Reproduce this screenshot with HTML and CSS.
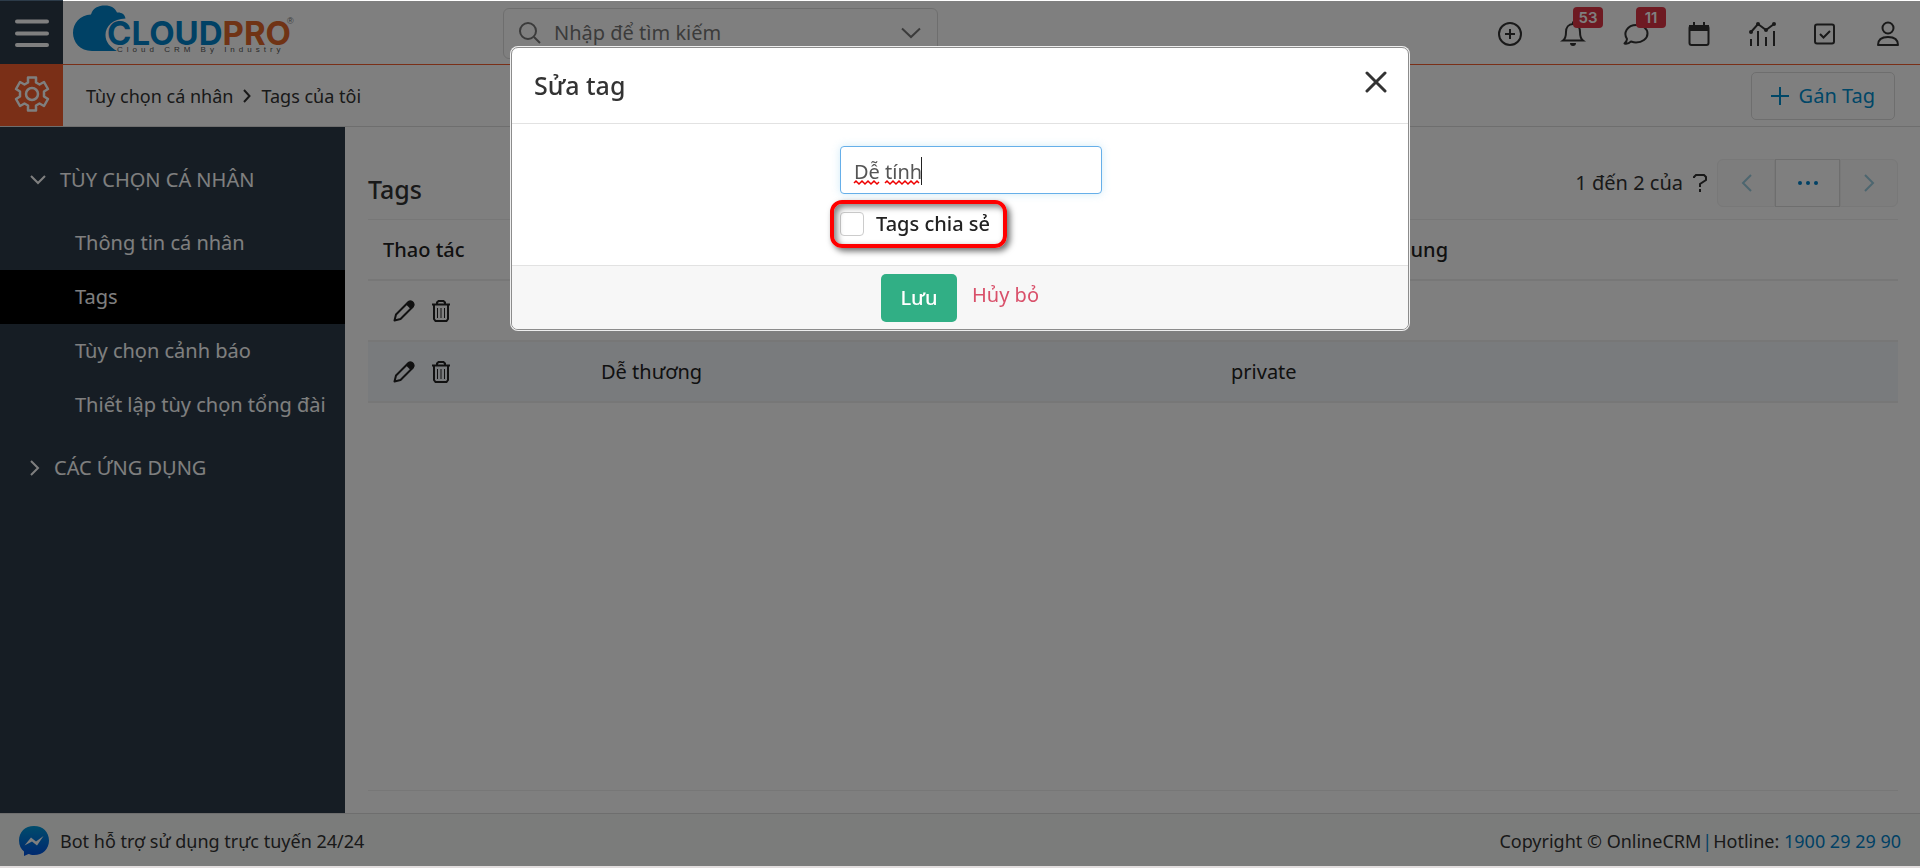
FILE: index.html
```html
<!DOCTYPE html>
<html lang="vi">
<head>
<meta charset="utf-8">
<title>Tags của tôi - CloudPro</title>
<link rel="stylesheet" href="styles.css">
</head>
<body>
<div class="page">
  <header class="topbar">
    <button class="tile tile-menu" aria-label="Menu">
      <svg width="36" height="30" viewBox="0 0 36 30" fill="none" stroke="currentColor" stroke-width="4" stroke-linecap="round"><path d="M3 3.500h30M3 15.500h30M3 27h30"/></svg>
    </button>
    <a class="logo" href="#" aria-label="CloudPro">
      <svg width="230" height="56" viewBox="0 0 230 56">
        <path class="logo-blue" d="M46 47H21C9 47 2 38 2 29C2 19 9 11 20 10.500C22 4 27 1.500 34 1.500C40 1.500 44 4 46 8.500C50 8 54 10 54.500 14.500C42 15 34.500 22 34.500 31C34.500 38 39 43 46 47Z"/>
        <text class="logo-name" x="36" y="41"><tspan class="logo-blue">CLOUD</tspan><tspan class="logo-orange">PRO</tspan></text>
        <text class="logo-tag" x="46" y="48">Cloud CRM By Industry</text>
        <text class="logo-mark" x="216" y="20">®</text>
      </svg>
    </a>
    <div class="search">
      <svg width="24" height="24" viewBox="0 0 24 24" fill="none" stroke="currentColor" stroke-width="2"><circle cx="10" cy="10" r="8"/><path d="M16 16l6 6"/></svg>
      <input class="search-input" type="text" aria-label="Tìm kiếm" placeholder="Nhập để tìm kiếm">
      <svg width="20" height="12" viewBox="0 0 20 12" fill="none" stroke="currentColor" stroke-width="2"><path d="M1 1.500l9 8.500l9-8.500"/></svg>
    </div>
    <nav class="tools" aria-label="Công cụ">
      <button class="tool" aria-label="Thêm"><svg width="26" height="26" viewBox="0 0 26 26" fill="none" stroke="currentColor" stroke-width="2"><circle cx="13" cy="13" r="11"/><path d="M13 8v10M8 13h10"/></svg></button>
      <button class="tool" aria-label="Thông báo"><svg width="26" height="26" viewBox="0 0 26 26" fill="none" stroke="currentColor" stroke-width="2"><path d="M13 3C8.500 3 6 6.500 6 11C6 16 5 18 3 19.500H23C21 18 20 16 20 11C20 6.500 17.500 3 13 3ZM13 3V0.500"/><path fill="currentColor" stroke="none" d="M10 22h6a3 3 0 0 1-6 0Z"/></svg><span class="badge">53</span></button>
      <button class="tool" aria-label="Tin nhắn"><svg width="26" height="26" viewBox="0 0 26 26" fill="none" stroke="currentColor" stroke-width="2"><path stroke-linejoin="round" d="M4 18C0 12 4 4 13.500 4C20 4 24.500 8 24.500 12.500C24.500 18 19 21.500 13 21.500C11 21.500 9.500 21 8 20.500C6.500 22 4 23 1.500 22.500C3 21 4 19.500 4 18Z"/></svg><span class="badge">11</span></button>
      <button class="tool" aria-label="Lịch"><svg width="26" height="26" viewBox="0 0 26 26" fill="none" stroke="currentColor" stroke-width="2"><rect x="3.500" y="5" width="19" height="19" rx="2"/><path d="M8 1v4M18 1v4"/><path fill="currentColor" stroke="none" d="M3 4h20v6H3z"/></svg></button>
      <button class="tool" aria-label="Báo cáo"><svg width="28" height="26" viewBox="0 0 28 26" fill="none" stroke="currentColor" stroke-width="2"><path d="M3 11L10 3L18 9L26 3M3 18v7M10 10v15M18 16v9M26 10v15"/><g fill="currentColor" stroke="none"><circle cx="3" cy="11" r="2"/><circle cx="10" cy="3" r="2"/><circle cx="18" cy="9" r="2"/><circle cx="26" cy="3" r="2"/></g></svg></button>
      <button class="tool" aria-label="Công việc"><svg width="26" height="26" viewBox="0 0 26 26" fill="none" stroke="currentColor" stroke-width="2"><rect x="3" y="3.500" width="19" height="19" rx="2"/><path d="M8 13l3.500 3.500L18 10"/></svg></button>
      <button class="tool" aria-label="Tài khoản"><svg width="26" height="26" viewBox="0 0 26 26" fill="none" stroke="currentColor" stroke-width="2"><circle cx="13" cy="7" r="5.500"/><path stroke-linejoin="round" d="M3 24C3 18 6.500 16 13 16C19.500 16 23 18 23 24Z"/></svg></button>
    </nav>
  </header>

  <div class="subbar">
    <button class="tile tile-settings" aria-label="Thiết lập">
      <svg width="36" height="36" viewBox="0 0 36 36" fill="none" stroke="currentColor" stroke-width="2.500" stroke-linejoin="round"><path d="M14 1.500h8v5l3.500 2l4.500-2.500l4 7l-4 2.500v5l4 2.500l-4 7l-4.500-2.500l-3.500 2v5h-8v-5l-3.500-2L6 30l-4-7l4-2.500v-5L2 13l4-7l4.500 2.500l3.500-2z"/><circle cx="18" cy="18" r="6"/></svg>
    </button>
    <nav class="crumbs" aria-label="Đường dẫn">
      <a class="crumb" href="#">Tùy chọn cá nhân</a>
      <svg width="8" height="14" viewBox="0 0 8 14" fill="none" stroke="currentColor" stroke-width="2"><path d="M1 1l5.500 6L1 13"/></svg>
      <span class="crumb">Tags của tôi</span>
    </nav>
    <button class="assign"><svg width="18" height="18" viewBox="0 0 18 18" fill="none" stroke="currentColor" stroke-width="2"><path d="M9 0v18M0 9h18"/></svg>Gán Tag</button>
  </div>

  <div class="body">
    <aside class="sidebar">
      <button class="group"><svg width="16" height="10" viewBox="0 0 16 10" fill="none" stroke="currentColor" stroke-width="2"><path d="M1 1l7 7l7-7"/></svg>TÙY CHỌN CÁ NHÂN</button>
      <ul class="links">
        <li><a class="link" href="#">Thông tin cá nhân</a></li>
        <li><a class="link link-active" href="#">Tags</a></li>
        <li><a class="link" href="#">Tùy chọn cảnh báo</a></li>
        <li><a class="link" href="#">Thiết lập tùy chọn tổng đài</a></li>
      </ul>
      <button class="group"><svg width="10" height="16" viewBox="0 0 10 16" fill="none" stroke="currentColor" stroke-width="2"><path d="M1 1l7 7l-7 7"/></svg>CÁC ỨNG DỤNG</button>
    </aside>

    <main class="main">
      <div class="main-head">
        <h1 class="title">Tags</h1>
        <div class="pager">
          <span class="pager-text">1 đến 2 của</span>
          <button class="pager-total" aria-label="Tổng số"><svg width="14" height="18" viewBox="0 0 14 18" fill="none" stroke="currentColor" stroke-width="2"><path d="M1 4V3L3 1h8l2 2v3l-6 4v3M7 15v3"/></svg></button>
          <div class="pager-buttons">
            <button class="page-btn page-prev" disabled aria-label="Trang trước"><svg width="11" height="18" viewBox="0 0 11 18" fill="none" stroke="currentColor" stroke-width="2"><path d="M10 1L2 9l8 8"/></svg></button>
            <button class="page-btn page-more" aria-label="Chọn trang"><svg width="20" height="4" viewBox="0 0 20 4" fill="currentColor"><circle cx="2" cy="2" r="2"/><circle cx="10" cy="2" r="2"/><circle cx="18" cy="2" r="2"/></svg></button>
            <button class="page-btn page-next" disabled aria-label="Trang sau"><svg width="11" height="18" viewBox="0 0 11 18" fill="none" stroke="currentColor" stroke-width="2"><path d="M1 1l8 8l-8 8"/></svg></button>
          </div>
        </div>
      </div>
      <div class="table-wrap">
        <table class="table">
          <colgroup><col class="col-action"><col class="col-name"><col></colgroup>
          <thead><tr><th>Thao tác</th><th>Tags</th><th>Trạng thái dùng chung</th></tr></thead>
          <tbody>
            <tr>
              <td><div class="actions">
                <button class="action" aria-label="Sửa"><svg width="22" height="22" viewBox="0 0 22 22" fill="none" stroke="currentColor" stroke-width="2" stroke-linejoin="round"><path d="M1.500 20.500L3 14.500L15 2.500C17.500 0 22 4 19.500 7L7.500 19L1.500 20.500Z"/><path fill="currentColor" d="M14 4l2-2c3-1.500 5.500 1.500 4 4l-2 2z"/></svg></button>
                <button class="action" aria-label="Xóa"><svg width="20" height="22" viewBox="0 0 20 22" fill="none" stroke="currentColor" stroke-width="2"><path d="M1 4.500h18M6 4V2.500L7.500 1h5L14 2.500V4M3 5v14l1.500 2h11l1.500-2V5"/><path stroke-width="1" d="M6.500 8v10M10 8v10M13.500 8v10"/></svg></button>
              </div></td>
              <td>Dễ tính</td><td>private</td>
            </tr>
            <tr class="row-alt">
              <td><div class="actions">
                <button class="action" aria-label="Sửa"><svg width="22" height="22" viewBox="0 0 22 22" fill="none" stroke="currentColor" stroke-width="2" stroke-linejoin="round"><path d="M1.500 20.500L3 14.500L15 2.500C17.500 0 22 4 19.500 7L7.500 19L1.500 20.500Z"/><path fill="currentColor" d="M14 4l2-2c3-1.500 5.500 1.500 4 4l-2 2z"/></svg></button>
                <button class="action" aria-label="Xóa"><svg width="20" height="22" viewBox="0 0 20 22" fill="none" stroke="currentColor" stroke-width="2"><path d="M1 4.500h18M6 4V2.500L7.500 1h5L14 2.500V4M3 5v14l1.500 2h11l1.500-2V5"/><path stroke-width="1" d="M6.500 8v10M10 8v10M13.500 8v10"/></svg></button>
              </div></td>
              <td>Dễ thương</td><td>private</td>
            </tr>
          </tbody>
        </table>
      </div>
    </main>
  </div>

  <footer class="footer">
    <a class="bot" href="#">
      <svg width="30" height="30" viewBox="0 0 30 30"><defs><linearGradient id="msg" x1="0" y1="0" x2="0" y2="1"><stop offset="0" stop-color="#0098d8"/><stop offset="1" stop-color="#0050e0"/></linearGradient></defs><path fill="url(#msg)" d="M15 0C24 0 30 6 30 14.500S24 29 15 29C12.500 29 11 28.500 9.500 28L5 30V25.500C2 23 0 19.500 0 14.500C0 6 6 0 15 0Z"/><path fill="#fff" d="M5.500 19.500L12 11.500L17 15.500L24.500 10L18 19.500L13 15.500Z"/></svg>
      Bot hỗ trợ sử dụng trực tuyến 24/24
    </a>
    <p class="legal">Copyright © OnlineCRM<span class="bar">|</span>Hotline: <a class="phone" href="#">1900 29 29 90</a></p>
  </footer>
  <div class="shade"></div>
</div>

<div class="modal-layer">
  <form class="modal" role="dialog" aria-labelledby="modal-title">
    <div class="modal-head">
      <h2 class="modal-title" id="modal-title">Sửa tag</h2>
      <button class="close" type="button" aria-label="Đóng"><svg width="22" height="22" viewBox="0 0 22 22" fill="none" stroke="currentColor" stroke-width="3" stroke-linecap="round"><path d="M2 2l18 18M20 2L2 20"/></svg></button>
    </div>
    <div class="modal-body">
      <div class="fields">
        <div class="field">
          <input class="tag-input" type="text" aria-label="Tên tag" value="Dễ tính">
          <svg class="spelling" width="72" height="32" viewBox="0 0 72 32" fill="none"><path stroke="#e00" stroke-width="1.500" d="M1 27l2 -2l3 3l3 -3l3 3l3 -3l3 3l3 -3l3 3l2 -2M32 27l2 -2l3 3l3 -3l3 3l3 -3l3 3l3 -3l3 3l3 -3l3 3l3 -3l2 2"/><path stroke="#222" stroke-width="1" d="M68.500 1v28"/></svg>
        </div>
        <div class="check-row">
          <input class="check" type="checkbox" id="shared">
          <label class="check-label" for="shared">Tags chia sẻ</label>
          <span class="marker"></span>
        </div>
      </div>
    </div>
    <div class="modal-foot">
      <button class="save" type="submit">Lưu</button>
      <a class="cancel" href="#">Hủy bỏ</a>
    </div>
  </form>
</div>
</body>
</html>
```
FILE: styles.css
```css
* { box-sizing: border-box; }

body {
  margin: 0;
  background: #e2dede;
  color: #333;
  font: 20px/28px "Noto Sans", "Open Sans", sans-serif;
}

button, input { font: inherit; color: inherit; }
button { padding: 0; border: 0; background: none; display: flex; align-items: center; justify-content: center; }
a { color: inherit; text-decoration: none; }
svg { flex: none; }

.page {
  position: relative;
  display: flex;
  flex-direction: column;
  min-height: calc(100vh - 2px);
  background: #fff;
}
.shade { position: absolute; inset: 1px 0 0; background: rgba(0, 0, 0, .5); }

.topbar {
  display: flex;
  align-items: center;
  height: 65px;
  padding-right: 18px;
  border-bottom: 1px solid #f45e2e;
}
.tile { width: 63px; height: 100%; color: #fff; }
.tile-menu { padding-top: 2px; background: #2c3b49; }
.tile-settings { padding-bottom: 4px; background: #f45e2e; }
.logo { display: flex; margin-left: 8px; }
.logo-blue { fill: #0082ca; }
.logo-orange { fill: #e0662a; }
.logo-name { font: 700 33px Inter, sans-serif; }
.logo-tag { font: 8px "Liberation Sans", sans-serif; letter-spacing: 4px; fill: #555; }
.logo-mark { font: 9px "Liberation Sans", sans-serif; fill: #777; }

.search {
  display: flex;
  align-items: center;
  gap: 10px;
  width: 435px;
  height: 51px;
  margin: 2px 0 0 202px;
  padding: 0 16px 0 14px;
  border: 1px solid #ddd;
  border-radius: 6px;
  color: #777;
}
.search-input { flex: 1; min-width: 0; border: 0; background: none; outline: 0; }
.search-input::placeholder { color: #777; opacity: 1; }

.tools { display: flex; gap: 35px; margin-left: auto; padding-top: 4px; }
.tool { position: relative; width: 28px; height: 28px; color: #333; }
.badge {
  position: absolute;
  left: 14px;
  top: -13px;
  width: 30px;
  border-radius: 4px;
  background: #dc3545;
  color: #fff;
  font: 600 15px/21px Inter, sans-serif;
}

.subbar {
  display: flex;
  align-items: center;
  height: 62px;
  padding-right: 25px;
  border-bottom: 1px solid #ddd;
}
.crumbs { display: flex; align-items: center; gap: 10px; margin-left: 23px; }
.crumb, .footer { font-size: 18px; }
.assign {
  gap: 10px;
  height: 48px;
  margin-left: auto;
  padding: 0 19px;
  border: 1px solid #ddd;
  border-radius: 5px;
  color: #008ecf;
}

.body { display: flex; flex: 1; }
.sidebar { width: 345px; padding-top: 32px; background: #2c3b49; color: #fff; }
.group { gap: 14px; height: 42px; margin-left: 30px; }
.links { margin: 15px 0; padding: 0; list-style: none; }
.link { display: block; padding: 13px 0 13px 75px; white-space: nowrap; }
.link-active { background: #000; }

.main { display: flex; flex: 1; flex-direction: column; padding: 0 22px 22px 23px; }
.main-head { display: flex; align-items: center; justify-content: space-between; height: 92px; }
.title { margin: 31px 0 0; font-size: 25px; font-weight: 500; line-height: 32px; }
.pager { display: flex; align-items: center; margin-top: 20px; }
.pager-total { margin: 0 10px; }
.pager-buttons { display: flex; }
.page-btn { width: 58px; height: 48px; border: 1px solid #f0f0f0; background: #fafafa; color: #9accdf; }
.page-prev { border-radius: 6px 0 0 6px; }
.page-more { width: 65px; border-color: #ddd; background: #fff; color: #0082ca; }
.page-next { border-radius: 0 6px 6px 0; }

.table-wrap { flex: 1; border-top: 1px solid #eee; border-bottom: 1px solid #eee; }
.table { width: 100%; border-collapse: collapse; table-layout: fixed; color: #222; }
.col-action { width: 218px; }
.col-name { width: 630px; }
.table th, .table td { height: 61px; padding: 0 15px; border-bottom: 2px solid #eee; text-align: left; }
.table th { height: 60px; font-weight: 500; }
.row-alt { background: #f3f6fb; }
.actions { display: flex; gap: 16px; padding-left: 10px; }

.footer {
  display: flex;
  align-items: center;
  justify-content: space-between;
  height: 53px;
  padding: 2px 19px 0;
  border-top: 1px solid #ddd;
  background: #f7f9f7;
}
.bot { display: flex; align-items: center; gap: 11px; }
.legal { margin: 0; }
.bar { margin: 0 1px; color: #0082ca; }
.phone { color: #0082ca; }

.modal-layer { position: fixed; inset: 0; display: flex; align-items: flex-start; justify-content: center; padding-top: 47px; }
.modal {
  width: 898px;
  border: 1px solid #8c8c8c;
  border-radius: 7px;
  background: #fff;
  box-shadow: 0 0 0 1px #eee;
  overflow: hidden;
}
.modal-head { display: flex; align-items: center; justify-content: space-between; height: 76px; padding: 0 21px 0 22px; border-bottom: 1px solid #e2e2e2; }
.modal-title { margin: 0; padding-bottom: 2px; font-size: 25px; font-weight: 500; line-height: 32px; }
.close { height: 30px; margin-bottom: 8px; }
.modal-body { display: flex; justify-content: center; padding: 22px 0 27px 22px; }
.field { position: relative; display: flex; }
.tag-input {
  width: 262px;
  height: 48px;
  padding: 2px 13px 0;
  border: 1px solid #66afe9;
  border-radius: 4px;
  outline: 0;
  box-shadow: 0 0 8px rgba(102, 190, 233, .3);
  color: #555;
}
.spelling { position: absolute; left: 13px; top: 10px; }
.check-row { position: relative; display: flex; align-items: center; gap: 12px; width: 167px; margin-top: 16px; }
.check { width: 24px; height: 24px; margin: 0; appearance: none; border: 1px solid #ccc; border-radius: 4px; background: #fff; }
.check-label { color: #222; font-weight: 500; white-space: nowrap; }
.marker {
  position: absolute;
  inset: -10px 0 -10px -10px;
  border: 4px solid #f00;
  border-radius: 12px;
  box-shadow: 3px 3px 6px rgba(0, 0, 0, .6), inset 3px 3px 6px rgba(0, 0, 0, .5);
  pointer-events: none;
}
.modal-foot { display: flex; align-items: center; justify-content: center; gap: 15px; height: 64px; border-top: 1px solid #e2e2e2; background: #f7f7f7; }
.save { width: 76px; height: 48px; border-radius: 5px; background: #31af85; color: #fff; font-weight: 500; }
.cancel { padding-bottom: 5px; color: #d9506a; }
```
